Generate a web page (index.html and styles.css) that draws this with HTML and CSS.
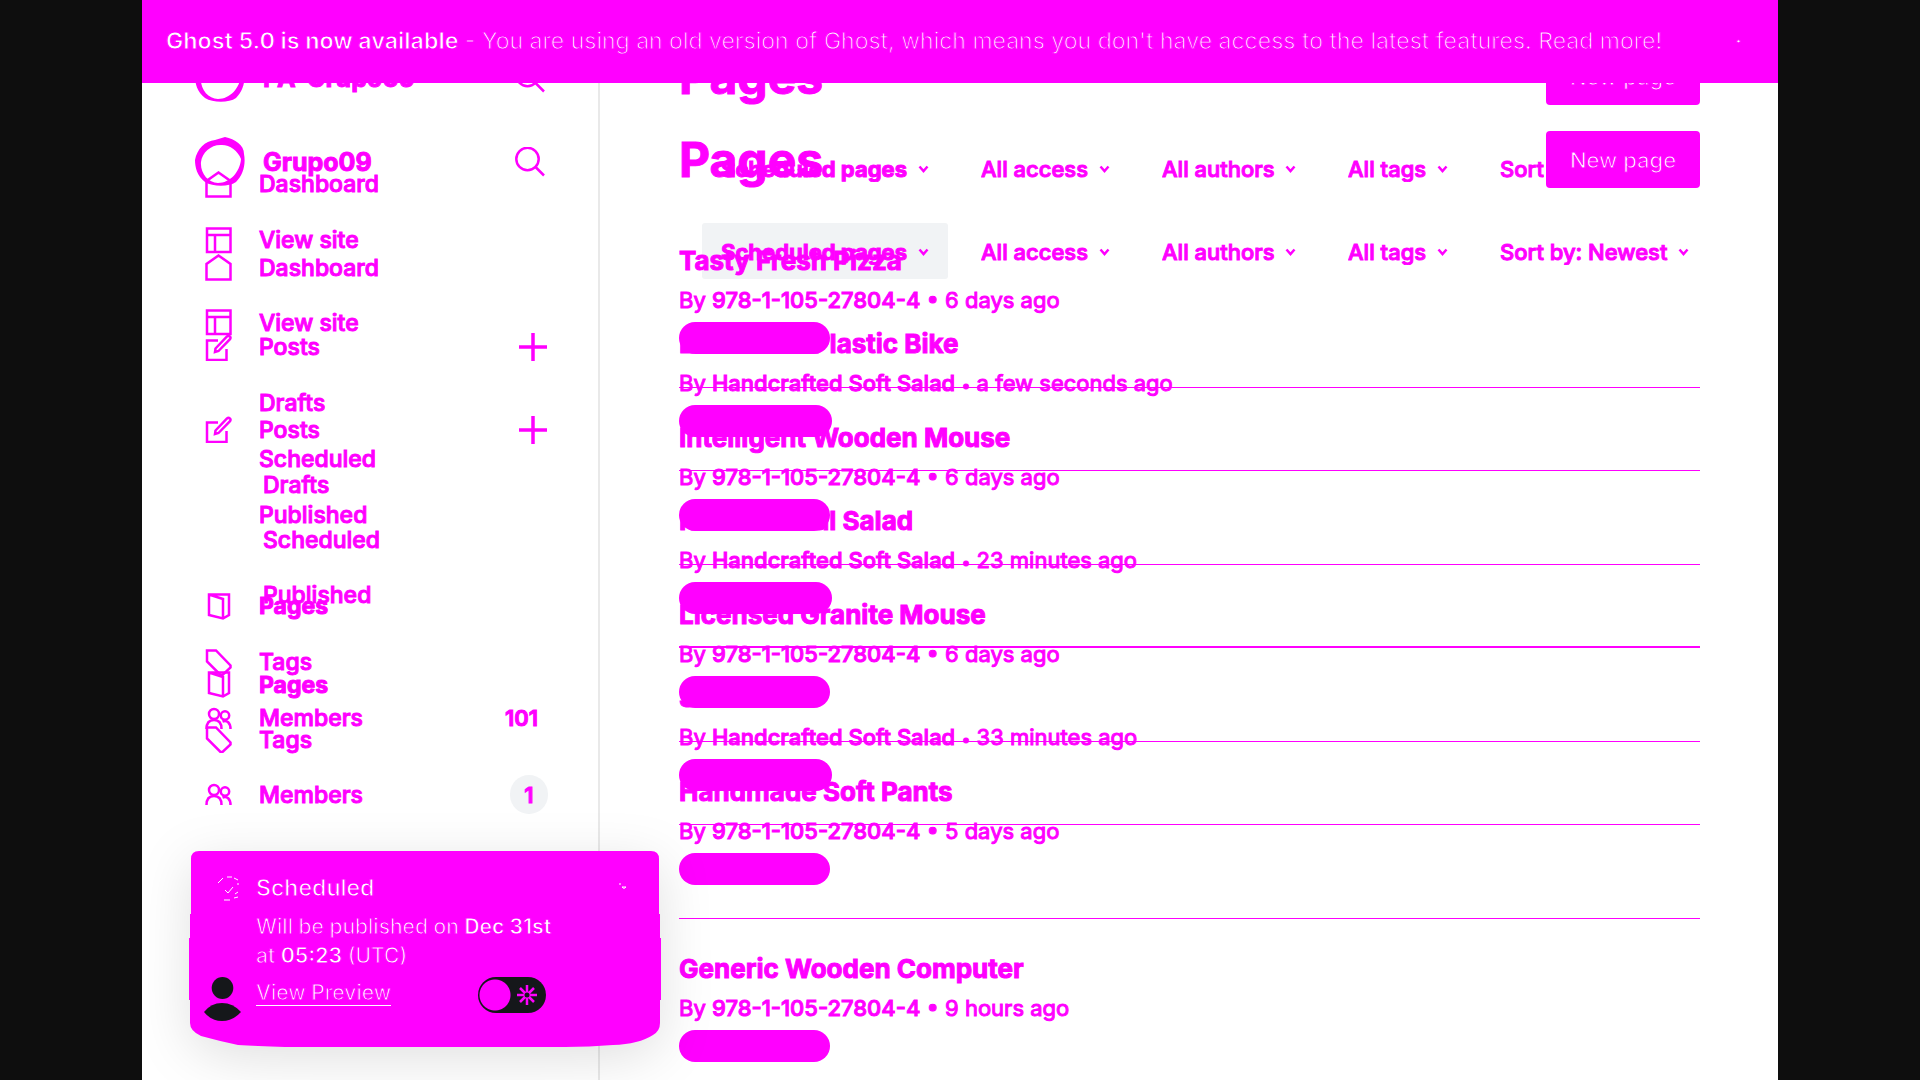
FILE: index.html
```
<!DOCTYPE html>
<html lang="en">
<head>
<meta charset="utf-8">
<title>Pages</title>
<link rel="stylesheet" href="styles.css">
</head>
<body>
<svg class="defs" aria-hidden="true">
  <symbol id="house" viewBox="0 0 27 27"><path d="M1.5 25.500V10L13.500 1.500L25.500 10V25.500Z"/></symbol>
  <symbol id="layout" viewBox="0 0 27 27"><path d="M2 1.500H25.500V25H2ZM2 8H25.500M10 8V25"/></symbol>
  <symbol id="edit" viewBox="0 0 27 27"><path d="M13 6.500H2V26H21.500V15M10.500 14.500L22 2.500C24 .8 26.500 3 25 5.200L13.500 17L10 18Z"/></symbol>
  <symbol id="book" viewBox="0 0 27 27"><path d="M4 1.500H24V22L18 25.500L4 22ZM4 1.500L18 6V25.500"/></symbol>
  <symbol id="tag" viewBox="0 0 27 27"><path d="M2 1.500H11L25.500 16.500V18.500L17.500 26H15.500L2 12.500Z"/></symbol>
  <symbol id="people" viewBox="0 0 27 27"><circle cx="9" cy="9" r="5"/><circle cx="20" cy="10.500" r="4.200"/><path d="M1.500 24C1.500 17 5 15 9 15S16.500 17 16.500 24M17.500 16.500C22 14.500 25.500 18 25.500 24"/></symbol>
  <symbol id="plus" viewBox="0 0 30 30"><path d="M1 15H29M15 1V29" stroke-width="3.500"/></symbol>
  <symbol id="search" viewBox="0 0 30 30"><circle cx="12.500" cy="12" r="11.200"/><path d="M20.500 20L29 28.500"/></symbol>
  <symbol id="chevron" viewBox="0 0 11 8"><path d="M1.500 1.500L5.500 6L9.500 1.500"/></symbol>
  <symbol id="ring" viewBox="0 0 50 50"><path fill="#f0f" stroke="none" fill-rule="evenodd" d="M30 0C40 2 49 8 49 17C51 28 48 38 41 45C34 50 18 50 10 45C2 39 0 30 0 23C2 12 10 4 20 3ZM27 8C17 7 7 15 6 25C5 36 13 46 23 46C35 46 45 35 46 22C43 14 35 8 27 8Z"/></symbol>
</svg>

<div class="frame">
  <div class="layer">
    <aside class="banner">
      <p class="banner-text"><strong>Ghost 5.0 is now available</strong> <span class="thin">- You are using an old version of Ghost, which means you don't have access to the latest features. <a href="#">Read more!</a></span></p>
      <button class="banner-close" aria-label="Close">·</button>
    </aside>
    <div class="screen screen-new">
      <div class="sidebar">
        <header class="brand">
          <svg class="logo"><use href="#ring"/></svg><span class="site">Grupo09</span>
          <button class="icon-button" aria-label="Search"><svg class="icon-lg"><use href="#search"/></svg></button>
        </header>
        <nav class="nav">
          <a href="#"><svg class="icon"><use href="#house"/></svg>Dashboard</a>
          <a href="#"><svg class="icon"><use href="#layout"/></svg>View site</a>
          <a class="group" href="#"><svg class="icon"><use href="#edit"/></svg>Posts<svg class="icon-lg end"><use href="#plus"/></svg></a>
          <a class="sub" href="#">Drafts</a>
          <a class="sub" href="#">Scheduled</a>
          <a class="sub" href="#">Published</a>
          <a class="group-small active" href="#"><svg class="icon"><use href="#book"/></svg>Pages</a>
          <a href="#"><svg class="icon"><use href="#tag"/></svg>Tags</a>
          <a href="#"><svg class="icon"><use href="#people"/></svg>Members<span class="end badge">1</span></a>
        </nav>
      </div>
      <main class="main">
        <header class="head"><h1>Pages</h1><button class="new-page">New page</button></header>
        <div class="filters">
          <label class="filter strong selected"><select aria-label="Type"><option>Scheduled pages</option></select><svg class="chevron"><use href="#chevron"/></svg></label>
          <label class="filter"><select aria-label="Access"><option>All access</option></select><svg class="chevron"><use href="#chevron"/></svg></label>
          <label class="filter"><select aria-label="Author"><option>All authors</option></select><svg class="chevron"><use href="#chevron"/></svg></label>
          <label class="filter"><select aria-label="Tag"><option>All tags</option></select><svg class="chevron"><use href="#chevron"/></svg></label>
          <label class="filter"><select aria-label="Order"><option>Sort by: Newest</option></select><svg class="chevron"><use href="#chevron"/></svg></label>
        </div>
        <ul class="list">
          <li><h3>Electronic Plastic Bike</h3><p>By <b>Handcrafted Soft Salad</b> <span class="dot">•</span> a few seconds ago</p><span class="pill"></span></li>
          <li class="double"><h3>Rustic Metal Salad</h3><p>By <b>Handcrafted Soft Salad</b> <span class="dot">•</span> 23 minutes ago</p><span class="pill"></span></li>
          <li><h3>S</h3><p>By <b>Handcrafted Soft Salad</b> <span class="dot">•</span> 33 minutes ago</p><span class="pill"></span></li>
        </ul>
      </main>
    </div>
  </div>

  <div class="layer">
    <div class="screen screen-old">
      <div class="sidebar">
        <header class="brand">
          <svg class="logo"><use href="#ring"/></svg><span class="site">PA-Grupo09</span>
          <button class="icon-button" aria-label="Search"><svg class="icon-lg"><use href="#search"/></svg></button>
        </header>
        <nav class="nav">
          <a href="#"><svg class="icon"><use href="#house"/></svg>Dashboard</a>
          <a href="#"><svg class="icon"><use href="#layout"/></svg>View site</a>
          <a class="group" href="#"><svg class="icon"><use href="#edit"/></svg>Posts<svg class="icon-lg end"><use href="#plus"/></svg></a>
          <a class="sub" href="#">Drafts</a>
          <a class="sub" href="#">Scheduled</a>
          <a class="sub" href="#">Published</a>
          <a class="group-small active" href="#"><svg class="icon"><use href="#book"/></svg>Pages</a>
          <a href="#"><svg class="icon"><use href="#tag"/></svg>Tags</a>
          <a href="#"><svg class="icon"><use href="#people"/></svg>Members<span class="end count">101</span></a>
        </nav>
      </div>
      <main class="main">
        <header class="head"><h1>Pages</h1><button class="new-page">New page</button></header>
        <div class="filters">
          <label class="filter strong"><select aria-label="Type"><option>Scheduled pages</option></select><svg class="chevron"><use href="#chevron"/></svg></label>
          <label class="filter"><select aria-label="Access"><option>All access</option></select><svg class="chevron"><use href="#chevron"/></svg></label>
          <label class="filter"><select aria-label="Author"><option>All authors</option></select><svg class="chevron"><use href="#chevron"/></svg></label>
          <label class="filter"><select aria-label="Tag"><option>All tags</option></select><svg class="chevron"><use href="#chevron"/></svg></label>
          <label class="filter"><select aria-label="Order"><option>Sort</option></select></label>
        </div>
        <ul class="list">
          <li><h3>Tasty Fresh Pizza</h3><p>By <b>978-1-105-27804-4</b> • 6 days ago</p><span class="pill"></span></li>
          <li><h3>Intelligent Wooden Mouse</h3><p>By <b>978-1-105-27804-4</b> • 6 days ago</p><span class="pill"></span></li>
          <li><h3>Licensed Granite Mouse</h3><p>By <b>978-1-105-27804-4</b> • 6 days ago</p><span class="pill"></span></li>
          <li><h3>Handmade Soft Pants</h3><p>By <b>978-1-105-27804-4</b> • 5 days ago</p><span class="pill"></span></li>
          <li><h3>Generic Wooden Computer</h3><p>By <b>978-1-105-27804-4</b> • 9 hours ago</p><span class="pill"></span></li>
        </ul>
      </main>
    </div>
  </div>

  <section class="toast">
    <svg class="toast-shape" viewBox="0 0 472 196" preserveAspectRatio="none"><path d="M2 8Q2 0 10 0H462Q470 0 470 8V63H471V87H472V149H471V172Q471 180 464 184Q450 193 424 194Q400 196 376 196H96Q66 195 49 194Q30 190 12 185Q1 180 1 172V149H0V87H1V63H2Z"/></svg>
    <svg class="toast-icon" viewBox="0 0 24 26"><path d="M1 7L6 2M10 1H15M17 2L21 4M21 7V9M8 14L11 17L16 11M18 18L21 16M7 24H13M17 22L21 21"/></svg>
    <div class="toast-body">
      <h2>Scheduled</h2>
      <p><span class="thin">Will be published on</span> <b>Dec 31st</b><br><span class="thin">at</span> <b>05:23</b> <span class="thin">(UTC)</span></p>
      <a href="#"><span class="thin">View Preview</span></a>
    </div>
    <button class="toast-close" aria-label="Dismiss"><svg viewBox="0 0 8 8"><path d="M0 2H2M3 5H7L5 6.500Z"/></svg></button>
  </section>

  <footer class="account">
    <button class="avatar" aria-label="Account"><svg viewBox="0 0 38 44"><ellipse cx="18.500" cy="11" rx="10.800" ry="11"/><path d="M0 35Q7 26 18 26T37 35Q29 44 18 44T0 35Z"/></svg></button>
    <label class="switch"><input type="checkbox" aria-label="Night mode"><svg viewBox="0 0 22 22"><path d="M11 1V21M1 11H21M4 4L18 18M18 4L4 18"/><circle cx="11" cy="11" r="2.500"/></svg></label>
  </footer>
</div>
</body>
</html>
```
FILE: styles.css
```
* { box-sizing: border-box; }
body {
  margin: 0;
  background: #0e0e0e;
  color: #f0f;
  font-family: Inter, "Liberation Sans", sans-serif;
  font-size: 23px;
  font-weight: 500;
}
h1, h2, h3, p, ul { margin: 0; padding: 0; }
a { color: inherit; text-decoration: none; }
button, select {
  font: inherit;
  color: inherit;
  background: none;
  border: 0;
  padding: 0;
  margin: 0;
  appearance: none;
  -webkit-text-stroke: inherit;
}
select { opacity: 1; height: 32px; }
svg { fill: none; stroke: #f0f; stroke-width: 2.500; flex: none; display: block; }
.defs { width: 0; height: 0; position: absolute; }

.frame {
  position: relative;
  display: grid;
  width: 100%;
  max-width: 1636px;
  height: 100vh;
  margin: 0 auto;
  overflow: hidden;
  background: #fff;
}
.layer { grid-area: 1 / 1; min-height: 0; }

.banner {
  position: relative;
  z-index: 2;
  display: flex;
  align-items: center;
  justify-content: space-between;
  height: 83px;
  padding: 0 36px 2px 24px;
  background: #f0f;
  color: #fff;
  white-space: nowrap;
}
.banner-text { line-height: 32px; font-weight: 400; }
strong { font-weight: 700; -webkit-text-stroke: 1px #f0f; }
.thin { -webkit-text-stroke: 1px #f0f; }
.banner-close { -webkit-text-stroke: 1px #f0f; }

.screen {
  display: grid;
  grid-template-columns: 458px 1fr;
  min-height: 100vh;
  -webkit-text-stroke: 1px #f0f;
}
.sidebar { border-right: 2px solid #e9e9e9; padding-right: 50px; }
.brand { display: flex; align-items: center; height: 156px; padding: 0 3px 0 53px; }
.screen-new .brand { height: 157px; }
.logo { width: 50px; height: 50px; margin-right: 18px; }
.site { font-weight: 700; font-size: 25px; }
.icon-button { margin-left: auto; }
.icon { width: 27px; height: 27px; margin-right: 27px; }
.icon-lg { width: 30px; height: 30px; }
.nav { padding-left: 63px; }
.nav a { display: flex; align-items: center; height: 56px; }
.screen-new .nav a { height: 55px; }
.nav .group { margin-top: 51px; }
.nav .group-small { margin-top: 35px; }
.screen-new .nav .group { margin-top: 52px; }
.nav .sub { padding-left: 54px; }
.screen-new .nav .sub { padding-left: 58px; }
.nav .active { font-weight: 700; }
.end { margin-left: auto; }
.count { padding-right: 10px; font-weight: 600; font-size: 22px; }
.badge {
  display: grid;
  place-items: center;
  width: 38px;
  height: 39px;
  border-radius: 20px;
  background: #f1f3f5;
  font-weight: 600;
  font-size: 22px;
}

.main { padding: 0 78px 0 79px; min-width: 0; }
.head { display: flex; align-items: center; justify-content: space-between; height: 140px; padding-top: 13px; }
h1 { font-size: 48px; font-weight: 700; line-height: 58px; }
.new-page {
  height: 57px;
  width: 154px;
  border-radius: 4px;
  background: #f0f;
  color: #fff;
  font-size: 22px;
}
.filters { display: flex; gap: 14px; height: 56px; padding-left: 23px; font-size: 22px; }
.filter { display: flex; align-items: center; gap: 10px; padding: 2px 19px 0; border-radius: 3px; white-space: nowrap; }
.selected { background: #f1f3f5; }
.strong { font-weight: 700; }
.chevron { width: 11px; height: 8px; }

.list { list-style: none; margin-top: 15px; }
.list li { padding: 32px 0 33px; border-bottom: 1px solid #f0f; }
.list .double { border-bottom-width: 2px; padding-bottom: 32px; }
h3 { font-size: 26px; font-weight: 700; line-height: 36px; }
.list p { margin: 5px 0 6px; font-size: 22px; font-weight: 400; line-height: 32px; }
.list b { font-weight: 500; }
.pill { display: block; width: 151px; height: 32px; border-radius: 16px; background: #f0f; }
.screen-new .pill { width: 153px; }
.list .dot { font-size: 16px; line-height: 16px; }

.toast {
  position: absolute;
  left: 47px;
  bottom: 33px;
  z-index: 3;
  display: flex;
  width: 472px;
  height: 196px;
  padding: 21px 34px 0 28px;
  color: #fff;
}
.toast-shape {
  position: absolute;
  inset: 0;
  width: 100%;
  height: 100%;
  overflow: visible;
  fill: #f0f;
  stroke: none;
  filter: drop-shadow(0 12px 26px rgba(0, 0, 0, .12));
}
.toast-icon { position: relative; width: 24px; height: 26px; margin: 4px 15px 0 0; stroke: #fff; stroke-width: 1; }
.toast-body { position: relative; flex: 1; }
h2 { font-size: 23px; font-weight: 600; line-height: 32px; -webkit-text-stroke: 1px #f0f; }
.toast p { margin: 8px 0; font-size: 21px; line-height: 29px; white-space: nowrap; }
.toast b { font-weight: 700; -webkit-text-stroke: 1px #f0f; }
.toast a { display: inline-block; border-bottom: 1px solid #fff; font-size: 21px; line-height: 24px; }
.toast-close { position: relative; align-self: flex-start; margin-top: 10px; }
.toast-close svg { width: 8px; height: 8px; stroke: #fff; stroke-width: 1; }

.account {
  position: absolute;
  left: 62px;
  bottom: 59px;
  z-index: 4;
  display: flex;
  align-items: flex-start;
  justify-content: space-between;
  width: 342px;
}
.avatar svg { width: 38px; height: 44px; fill: #15171a; stroke: none; }
.switch { position: relative; display: block; width: 68px; height: 36px; }
.switch input {
  appearance: none;
  width: 68px;
  height: 36px;
  margin: 0;
  border-radius: 18px;
  background: radial-gradient(circle at 17px 18px, #f0f 15px, #15171a 16px);
}
.switch svg { position: absolute; right: 8px; top: 7px; width: 22px; height: 22px; stroke-width: 2.500; }
.switch circle { fill: #15171a; stroke: none; }
```
